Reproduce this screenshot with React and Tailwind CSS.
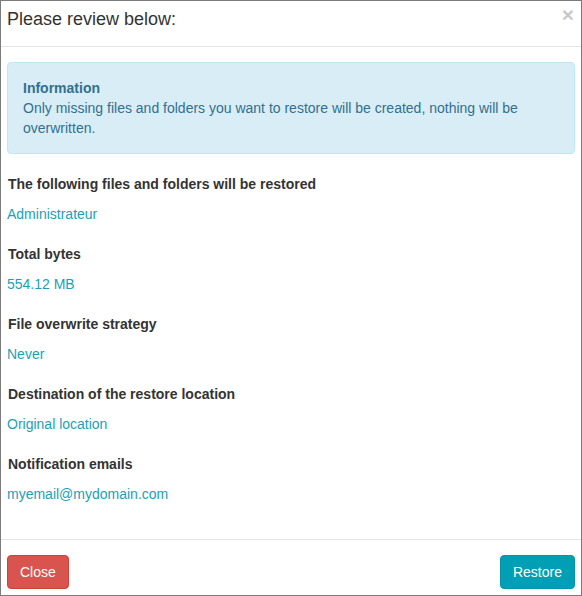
import React from "react";

const items = [
  { label: "The following files and folders will be restored", value: "Administrateur" },
  { label: "Total bytes", value: "554.12 MB" },
  { label: "File overwrite strategy", value: "Never" },
  { label: "Destination of the restore location", value: "Original location" },
  { label: "Notification emails", value: "myemail@mydomain.com" },
];

const App = () => {
  return (
    <div className="h-[596px] w-[582px] border border-[#7b7b7b] bg-white flex flex-col font-['Liberation_Sans',Arial,sans-serif] text-[14px] leading-[20px] text-[#333]">
      {/* Header */}
      <div className="h-[46px] shrink-0 border-b border-[#e5e5e5] px-[6px] pt-[5px] flex justify-between">
        <h4 className="text-[18px] leading-[26px]">Please review below:</h4>
        <button className="text-[21px] leading-[18px] font-bold text-[#c9c9c9] -mt-[1px] mr-[1px] h-[20px]">×</button>
      </div>

      {/* Body */}
      <div className="flex-1 px-[6px] pt-[15px]">
        <div className="bg-[#d9edf7] border border-[#bce8f1] rounded-[4px] text-[#31708f] p-[15px] mb-[20px]">
          <div className="font-bold">Information</div>
          <div>Only missing files and folders you want to restore will be created, nothing will be overwritten.</div>
        </div>

        {items.map((item) => (
          <div key={item.label} className="mb-[20px]">
            <div className="font-bold pl-[1px] mb-[10px]">{item.label}</div>
            <div className="text-[#1a9fba]">{item.value}</div>
          </div>
        ))}
      </div>

      {/* Footer */}
      <div className="h-[56px] shrink-0 border-t border-[#e5e5e5] px-[6px] pt-[15px] flex justify-between items-start">
        <button className="h-[34px] px-[12px] rounded-[4px] bg-[#d9534f] border border-[#d43f3a] text-white">
          Close
        </button>
        <button className="h-[34px] px-[12px] rounded-[4px] bg-[#019fb5] border border-[#0196ab] text-white">
          Restore
        </button>
      </div>
    </div>
  );
};

export default App;
